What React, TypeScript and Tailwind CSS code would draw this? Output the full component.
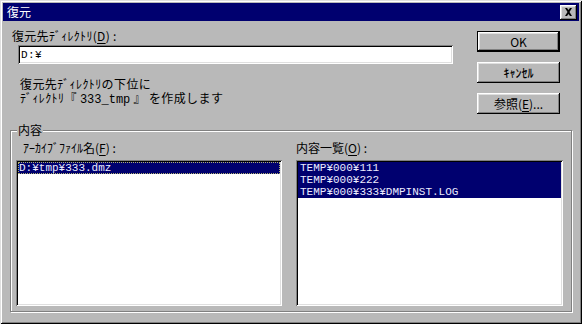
import React from "react";

const sunken =
  "shadow-[inset_1px_1px_0_#808080,inset_-1px_-1px_0_#ffffff,inset_2px_2px_0_#000000,inset_-2px_-2px_0_#dfdfdf]";
const raised =
  "shadow-[inset_-1px_-1px_0_#000000,inset_1px_1px_0_#ffffff,inset_-2px_-2px_0_#808080,inset_2px_2px_0_#dfdfdf]";

function U({ children }: { children: React.ReactNode }) {
  return <span className="underline underline-offset-[2px]">{children}</span>;
}

export default function App() {
  return (
    <div className="w-[582px] h-[324px] bg-[#b9b9b9] flex flex-col p-[3px] text-black text-[12px] font-['Noto_Sans_CJK_JP','Noto_Sans',sans-serif] shadow-[inset_1px_1px_0_#dfdfdf,inset_-1px_-1px_0_#000000,inset_2px_2px_0_#ffffff,inset_-2px_-2px_0_#808080]">
      {/* Title bar */}
      <div className="h-[18px] bg-[#00006f] flex items-center justify-between pl-[4px] pr-[2px]">
        <span className="text-white text-[12px] leading-[14px]">復元</span>
        <div className={`w-[17px] h-[15px] bg-[#b9b9b9] flex items-center justify-center ${raised}`}>
          <svg width="9" height="8" viewBox="0 0 9 8">
            <path d="M1 0h2l1.5 2 1.5-2h2l-2.5 4 2.5 4h-2l-1.5-2-1.5 2h-2l2.5-4z" fill="#000" />
          </svg>
        </div>
      </div>

      {/* Top section */}
      <div className="h-[109px] flex">
        <div className="flex flex-col pl-[9px]">
          <div className="mt-[8px] leading-[14px] h-[14px] tracking-[0.3px]">
            復元先ﾃﾞｨﾚｸﾄﾘ(<U>D</U>)&nbsp;:
          </div>
          <div className={`ml-[6px] mt-[2px] w-[435px] h-[19px] bg-white flex items-center pl-[3px] ${sunken}`}>
            <span className="font-['Liberation_Mono',monospace] text-[11px] leading-[12px] tracking-[0.4px]">D:¥</span>
          </div>
          <div className="ml-[8px] mt-[13px] leading-[14px] tracking-[0.4px]">
            <div className="h-[14px]">復元先ﾃﾞｨﾚｸﾄﾘの下位に</div>
            <div className="h-[14px]">
              ﾃﾞｨﾚｸﾄﾘ『&nbsp;<span className="font-['Liberation_Mono',monospace] tracking-normal">333_tmp</span>&nbsp;』&nbsp;を作成します
            </div>
          </div>
        </div>
        <div className="ml-auto mr-[19px] mt-[10px] flex flex-col gap-[10px]">
          <div className="w-[83px] h-[21px] border border-black">
            <div className={`w-full h-full flex items-center justify-center leading-[14px] ${raised}`}>OK</div>
          </div>
          <div className={`w-[83px] h-[21px] flex items-center justify-center leading-[14px] font-medium ${raised}`}>ｷｬﾝｾﾙ</div>
          <div className={`w-[83px] h-[21px] flex items-center justify-center leading-[14px] ${raised}`}>
            参照(<U>E</U>)...
          </div>
        </div>
      </div>

      {/* Group box */}
      <div className="relative ml-[7px] mr-[7px] h-[182px] border border-[#808080] shadow-[inset_1px_1px_0_#ffffff,1px_1px_0_#ffffff]">
        <span className="absolute left-[6px] -top-[8px] px-[1px] bg-[#b9b9b9] leading-[14px]">内容</span>
        <div className="flex pl-[5px] pt-[10px] gap-[14px]">
          <div className="flex flex-col">
            <div className="pl-[7px] leading-[14px] h-[14px]">
              ｱｰｶｲﾌﾞﾌｧｲﾙ名(<U>F</U>)&nbsp;:
            </div>
            <div className={`mt-[5px] w-[266px] h-[146px] bg-white p-[2px] ${sunken}`}>
              <div className="h-[12px] bg-[#00006f] text-[#ececff] font-['Liberation_Mono',monospace] text-[11px] leading-[12px] pl-[1px] outline outline-1 outline-dotted outline-[#b0b070] -outline-offset-1">
                D:¥tmp¥333.dmz
              </div>
            </div>
          </div>
          <div className="flex flex-col">
            <div className="leading-[14px] h-[14px]">
              内容一覧(<U>O</U>)&nbsp;:
            </div>
            <div className={`mt-[5px] w-[267px] h-[146px] bg-white p-[2px] ${sunken}`}>
              <div className="bg-[#00006f] text-[#ececff] font-['Liberation_Mono',monospace] text-[11px] leading-[12px] pl-[2px]">
                <div className="h-[12px]">TEMP¥000¥111</div>
                <div className="h-[12px]">TEMP¥000¥222</div>
                <div className="h-[12px]">TEMP¥000¥333¥DMPINST.LOG</div>
              </div>
            </div>
          </div>
        </div>
      </div>
    </div>
  );
}
